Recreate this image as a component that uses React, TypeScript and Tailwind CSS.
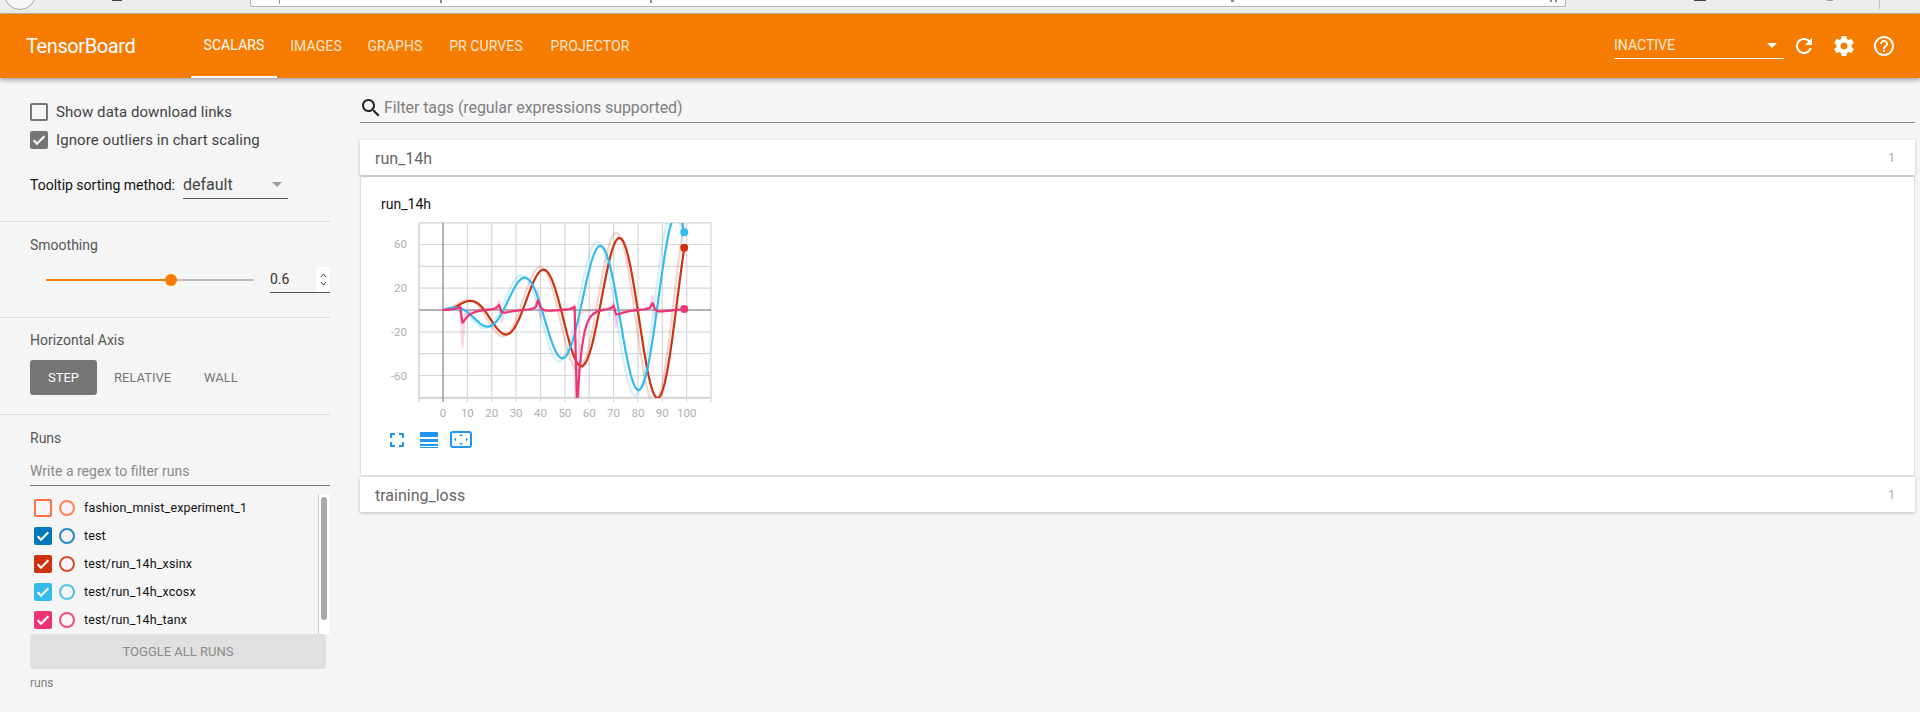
import React from "react";

const X = (v: number) => 62 + 2.437 * v;
const Y = (v: number) => 95 - 1.092 * v;

function series(f: (i: number) => number) {
  const raw: number[] = [];
  const smooth: number[] = [];
  let last = 0;
  for (let i = 0; i < 100; i++) {
    const v = f(i);
    raw.push(v);
    last = last * 0.6 + 0.4 * v;
    smooth.push(last / (1 - Math.pow(0.6, i + 1)));
  }
  return { raw, smooth };
}
const toPath = (a: number[]) =>
  a.map((v, i) => `${i ? "L" : "M"}${X(i).toFixed(2)} ${Y(Math.max(-260, Math.min(260, v))).toFixed(2)}`).join("");

const CHARTS = [
  { color: "#cc3311", ...series((i) => i * Math.sin(i / 5)) },
  { color: "#33bbee", ...series((i) => i * Math.cos(i / 5)) },
  { color: "#ee3377", ...series((i) => Math.tan(i / 5)) },
];

function Chart() {
  const gridY = [80, 60, 40, 20, -20, -40, -60, -80];
  const gridX = [10, 20, 30, 40, 50, 60, 70, 80, 90, 100];
  return (
    <svg width="345" height="208" viewBox="0 0 345 208" className="block" style={{ fontFamily: "Roboto, sans-serif" }}>
      <defs>
        <clipPath id="plot">
          <rect x="38" y="8" width="292" height="175" />
        </clipPath>
      </defs>
      {gridY.map((v) => (
        <line key={v} x1="38" x2="330" y1={Y(v)} y2={Y(v)} stroke="#d8d8d8" strokeWidth="1.2" />
      ))}
      {gridX.map((v) => (
        <line key={v} x1={X(v)} x2={X(v)} y1="8" y2="187" stroke="#d6d6d6" strokeWidth="1.2" />
      ))}
      <line x1="38" x2="38" y1="8" y2="187" stroke="#dcdcdc" strokeWidth="2" />
      <line x1="330" x2="330" y1="8" y2="187" stroke="#dcdcdc" strokeWidth="1.5" />
      <line x1="38" x2="330" y1="183" y2="183" stroke="#d8d8d8" strokeWidth="2" />
      <line x1="38" x2="330" y1="8" y2="8" stroke="#e0e0e0" strokeWidth="1.2" />
      <line x1={X(0)} x2={X(0)} y1="8" y2="187" stroke="#9a9a9a" strokeWidth="1.5" />
      <line x1="38" x2="330" y1={Y(0)} y2={Y(0)} stroke="#9a9a9a" strokeWidth="1.5" />
      {[60, 20, -20, -60].map((v) => (
        <text key={v} x="26" y={Y(v) + 4} textAnchor="end" fontSize="11.5" fill="#b0b0b0">
          {v}
        </text>
      ))}
      {[0, 10, 20, 30, 40, 50, 60, 70, 80, 90, 100].map((v) => (
        <text key={v} x={X(v)} y="202" textAnchor="middle" fontSize="11.5" fill="#b0b0b0">
          {v}
        </text>
      ))}
      <g clipPath="url(#plot)" fill="none" strokeLinejoin="round" strokeLinecap="round">
        {CHARTS.map((c) => (
          <path key={c.color} d={toPath(c.raw)} stroke={c.color} strokeWidth="2.2" opacity="0.2" />
        ))}
        {CHARTS.map((c) => (
          <path key={c.color} d={toPath(c.smooth)} stroke={c.color} strokeWidth="2.2" />
        ))}
      </g>
      {CHARTS.map((c) => (
        <circle key={c.color} cx={X(99)} cy={Y(c.smooth[99])} r="4" fill={c.color} />
      ))}
    </svg>
  );
}

function Icon({ d, size = 24, className = "" }: { d: string; size?: number; className?: string }) {
  return (
    <svg width={size} height={size} viewBox="0 0 24 24" className={className} fill="currentColor">
      <path d={d} />
    </svg>
  );
}

const CHECK = "M4 12.5l5 5L20 6.5";

function Check({ boxClass, checked }: { boxClass: string; checked: boolean }) {
  return (
    <span className={`flex h-[18px] w-[18px] shrink-0 items-center justify-center rounded-[2px] border-2 ${boxClass}`}>
      {checked && (
        <svg width="16" height="16" viewBox="0 0 24 24" fill="none" stroke="#fff" strokeWidth="3.2" className="shrink-0">
          <path d={CHECK} />
        </svg>
      )}
    </span>
  );
}

const RUNS = [
  { name: "fashion_mnist_experiment_1", box: "border-[#ff7043]", ring: "border-[#ff7043]", checked: false },
  { name: "test", box: "border-[#0077bb] bg-[#0077bb]", ring: "border-[#0077bb]", checked: true },
  { name: "test/run_14h_xsinx", box: "border-[#cc3311] bg-[#cc3311]", ring: "border-[#cc3311]", checked: true },
  { name: "test/run_14h_xcosx", box: "border-[#33bbee] bg-[#33bbee]", ring: "border-[#33bbee]", checked: true },
  { name: "test/run_14h_tanx", box: "border-[#ee3377] bg-[#ee3377]", ring: "border-[#ee3377]", checked: true },
];

function Pane({ title }: { title: string }) {
  return (
    <div className="flex h-[35px] items-center justify-between bg-white pl-[15px] pr-[20px] shadow-[0_1px_3px_rgba(0,0,0,0.25)]">
      <span className="mt-[3px] text-[16px] text-[#666666]">{title}</span>
      <span className="text-[12px] text-[#aaaaaa]">1</span>
    </div>
  );
}

export default function App() {
  return (
    <div className="flex h-[712px] w-[1920px] flex-col overflow-hidden bg-[#f5f5f5]" style={{ fontFamily: "Roboto, sans-serif" }}>
      {/* Browser strip */}
      <div className="flex h-[14px] shrink-0 items-start border-b border-[#bdbdbd] bg-[#ececec]">
        <div className="ml-[4px] mt-[-22px] h-[32px] w-[32px] shrink-0 rounded-full border border-[#a8a8a8] bg-[#f6f6f6]" />
        <div className="ml-[76px] h-[1px] w-[10px] shrink-0 bg-[#444444]" />
        <div className="ml-[128px] flex h-[7px] w-[1316px] shrink-0 rounded-b-[3px] border border-t-0 border-[#b5b5b5] bg-white pl-[28px]">
          <div className="h-[4px] w-[1px] bg-[#999999]" />
          <div className="ml-[160px] h-[3px] w-[2px] bg-[#888888]" />
          <div className="ml-[208px] h-[3px] w-[2px] bg-[#888888]" />
          <div className="ml-[579px] h-[2px] w-[3px] bg-[#888888]" />
          <div className="ml-[316px] h-[2px] w-[2px] bg-[#888888]" />
          <div className="ml-[3px] h-[2px] w-[2px] bg-[#888888]" />
        </div>
        <div className="ml-[128px] h-[1px] w-[12px] shrink-0 bg-[#444444]" />
        <div className="ml-[121px] h-[1px] w-[6px] shrink-0 bg-[#999999]" />
        <div className="ml-[46px] h-[9px] w-[1px] shrink-0 bg-[#c4c4c4]" />
      </div>

      {/* Orange toolbar */}
      <header className="relative z-10 flex h-[64px] shrink-0 items-center bg-[#f57c00] pl-[26px] text-white shadow-[0_2px_5px_rgba(0,0,0,0.35)]">
        <div className="w-[165px] text-[20px] leading-none tracking-[-0.4px]">TensorBoard</div>
        <nav className="flex h-full text-[14px] tracking-[0.1px]">
          <div className="flex h-full w-[86px] items-center justify-center border-b-2 border-white">SCALARS</div>
          <div className="flex h-full w-[78px] items-center justify-center text-white/80">IMAGES</div>
          <div className="flex h-full w-[80px] items-center justify-center text-white/80">GRAPHS</div>
          <div className="flex h-full w-[102px] items-center justify-center text-white/80">PR CURVES</div>
          <div className="flex h-full w-[106px] items-center justify-center text-white/80">PROJECTOR</div>
        </nav>
        <div className="flex-1" />
        <div className="mb-[2px] flex h-[28px] w-[170px] items-center justify-between border-b border-white pr-[7px] pt-[2px] text-[14px] text-white/85">
          <span>INACTIVE</span>
          <span className="h-0 w-0 border-x-[5px] border-t-[5px] border-x-transparent border-t-white" />
        </div>
        <div className="ml-[8px] flex items-center gap-[16px] pr-[24px]">
          <Icon size={24} d="M17.65 6.35C16.2 4.9 14.21 4 12 4c-4.42 0-7.99 3.58-7.99 8s3.57 8 7.99 8c3.73 0 6.84-2.55 7.73-6h-2.08c-.82 2.33-3.04 4-5.65 4-3.31 0-6-2.69-6-6s2.69-6 6-6c1.66 0 3.14.69 4.22 1.78L13 11h7V4l-2.35 2.35z" />
          <Icon size={24} d="M19.43 12.98c.04-.32.07-.64.07-.98s-.03-.66-.07-.98l2.11-1.65c.19-.15.24-.42.12-.64l-2-3.46c-.12-.22-.39-.3-.61-.22l-2.49 1c-.52-.4-1.08-.73-1.69-.98l-.38-2.65C14.46 2.18 14.25 2 14 2h-4c-.25 0-.46.18-.49.42l-.38 2.65c-.61.25-1.17.59-1.69.98l-2.49-1c-.23-.09-.49 0-.61.22l-2 3.46c-.13.22-.07.49.12.64l2.11 1.65c-.04.32-.07.65-.07.98s.03.66.07.98l-2.11 1.65c-.19.15-.24.42-.12.64l2 3.46c.12.22.39.3.61.22l2.49-1c.52.4 1.08.73 1.69.98l.38 2.65c.03.24.24.42.49.42h4c.25 0 .46-.18.49-.42l.38-2.65c.61-.25 1.17-.59 1.69-.98l2.49 1c.23.09.49 0 .61-.22l2-3.46c.12-.22.07-.49-.12-.64l-2.11-1.65zM12 15.5c-1.93 0-3.5-1.57-3.5-3.5s1.57-3.5 3.5-3.5 3.5 1.57 3.5 3.5-1.57 3.5-3.5 3.5z" />
          <Icon size={24} d="M11 18h2v-2h-2v2zm1-16C6.48 2 2 6.48 2 12s4.48 10 10 10 10-4.48 10-10S17.52 2 12 2zm0 18c-4.41 0-8-3.59-8-8s3.59-8 8-8 8 3.59 8 8-3.59 8-8 8zm0-14c-2.21 0-4 1.79-4 4h2c0-1.1.9-2 2-2s2 .9 2 2c0 2-3 1.75-3 5h2c0-2.25 3-2.5 3-5 0-2.21-1.79-4-4-4z" />
        </div>
      </header>

      <div className="flex min-h-0 flex-1">
        {/* Sidebar */}
        <aside className="w-[330px] shrink-0">
          <div className="h-[144px] border-b border-[#dddddd] pl-[30px] pt-[25px]">
            <div className="flex h-[18px] items-center gap-[8px] text-[15px] tracking-[0.08px] text-[#444444]">
              <Check boxClass="border-[#757575]" checked={false} />
              <span>Show data download links</span>
            </div>
            <div className="mt-[10px] flex h-[18px] items-center gap-[8px] text-[15px] tracking-[0.08px] text-[#444444]">
              <Check boxClass="border-[#757575] bg-[#757575]" checked />
              <span>Ignore outliers in chart scaling</span>
            </div>
            <div className="mt-[22px] flex items-center text-[14px] text-[#111111]">
              <span className="w-[153px]">Tooltip sorting method:</span>
              <div className="flex h-[28px] w-[105px] items-center justify-between border-b border-[#555555] pr-[6px] text-[16px] text-[#444444]">
                <span>default</span>
                <span className="h-0 w-0 border-x-[5px] border-t-[5px] border-x-transparent border-t-[#9e9e9e]" />
              </div>
            </div>
          </div>

          <div className="h-[96px] border-b border-[#dddddd] pl-[30px] pt-[14px]">
            <div className="text-[14px] leading-[18px] text-[#555555]">Smoothing</div>
            <div className="mt-[13px] flex items-center">
              <div className="ml-[16px] flex w-[208px] items-center">
                <div className="h-[2px] w-[119px] bg-[#f57c00]" />
                <div className="h-[12px] w-[12px] shrink-0 rounded-full bg-[#f57c00]" />
                <div className="h-[2px] flex-1 bg-[#bdbdbd]" />
              </div>
              <div className="ml-[16px] flex h-[26px] w-[60px] items-center justify-between border-b border-[#555555] text-[14px] text-[#333333]">
                <span>0.6</span>
                <div className="flex h-full w-[14px] flex-col items-center justify-center gap-[3px] bg-white">
                  <svg width="7" height="5" viewBox="0 0 7 5" fill="none" stroke="#444" strokeWidth="1"><path d="M1 4l2.5-3L6 4" /></svg>
                  <svg width="7" height="5" viewBox="0 0 7 5" fill="none" stroke="#444" strokeWidth="1"><path d="M1 1l2.5 3L6 1" /></svg>
                </div>
              </div>
            </div>
          </div>

          <div className="h-[97px] border-b border-[#dddddd] pl-[30px] pt-[13px]">
            <div className="text-[14px] leading-[18px] text-[#555555]">Horizontal Axis</div>
            <div className="mt-[11px] flex items-center text-[13px] text-[#757575]">
              <div className="flex h-[35px] w-[67px] items-center justify-center rounded-[3px] bg-[#757575] text-white">STEP</div>
              <div className="ml-[17px] w-[57px] text-center">RELATIVE</div>
              <div className="ml-[33px]">WALL</div>
            </div>
          </div>

          <div className="pt-[14px]">
            <div className="pl-[30px] text-[14px] leading-[18px] text-[#555555]">Runs</div>
            <div className="ml-[30px] mt-[11px] h-[28px] border-b border-[#757575] pt-[3px] text-[14px] leading-[20px] text-[#8a8a8a]">Write a regex to filter runs</div>
            <div className="ml-[30px] mt-[8px] flex h-[140px] overflow-hidden">
              <div className="w-[288px] pl-[4px] pt-[5px]">
                {RUNS.map((r) => (
                  <div key={r.name} className="flex h-[28px] items-start">
                    <Check boxClass={r.box} checked={r.checked} />
                    <span className={`ml-[7px] mt-[1px] h-[16px] w-[16px] rounded-full border-2 opacity-85 ${r.ring}`} />
                    <span className="ml-[9px] text-[12.5px] leading-[18px] tracking-[0.15px] text-[#111111]">{r.name}</span>
                  </div>
                ))}
              </div>
              <div className="w-[12px] border-l border-[#cccccc] bg-white pl-[2px] pt-[3px]">
                <div className="h-[123px] w-[6px] rounded-full bg-[#a9a9ad]" />
              </div>
            </div>
            <div className="ml-[30px] flex h-[35px] w-[296px] items-center justify-center rounded-[3px] bg-[#e0e0e0] text-[13px] text-[#8a8a8a]">TOGGLE ALL RUNS</div>
            <div className="ml-[30px] mt-[7px] text-[12px] leading-[14px] text-[#808080]">runs</div>
          </div>
        </aside>

        {/* Main */}
        <main className="min-w-0 flex-1 pl-[30px] pr-[5px]">
          <div className="mt-[17px] flex h-[28px] items-center border-b border-[#8a8a8a] text-[16px] tracking-[-0.08px] text-[#808080]">
            <Icon size={24} className="ml-[-1px] mb-[2px] text-[#222222]" d="M15.5 14h-.79l-.28-.27C15.41 12.59 16 11.11 16 9.5 16 5.91 13.09 3 9.5 3S3 5.91 3 9.5 5.91 16 9.5 16c1.61 0 3.09-.59 4.23-1.57l.27.28v.79l5 4.99L20.49 19l-4.99-5zm-6 0C7.01 14 5 11.99 5 9.5S7.01 5 9.5 5 14 7.01 14 9.5 11.99 14 9.5 14z" />
            <span className="mb-[2px] ml-[1px]">Filter tags (regular expressions supported)</span>
          </div>
          <div className="mt-[17px]">
            <Pane title="run_14h" />
            <div className="mx-[1px] mt-[2px] h-[298px] bg-white pl-[20px] pt-[18px] shadow-[0_0_2px_rgba(0,0,0,0.3)]">
              <div className="text-[14px] leading-[18px] text-[#111111]">run_14h</div>
              <div className="mt-[2px]">
                <Chart />
              </div>
              <div className="ml-[9px] mt-[8px] flex items-center text-[#2196f3]">
                <svg width="14" height="14" viewBox="0 0 14 14" fill="currentColor">
                  <path d="M0 0h5v2H2v3H0zM9 0h5v5h-2V2H9zM0 9h2v3h3v2H0zM12 9h2v5H9v-2h3z" />
                </svg>
                <svg width="18" height="16" viewBox="0 0 18 16" fill="currentColor" className="ml-[16px]">
                  <path d="M0 0h18v5H0zM0 7h18v3H0zM0 12h18v2H0zM0 15h18v1H0z" />
                </svg>
                <svg width="22" height="17" viewBox="0 0 22 17" className="ml-[12px]">
                  <rect x="1" y="1" width="20" height="15" rx="2" fill="none" stroke="currentColor" strokeWidth="2" />
                  <path d="M11 3l2 2H9zM11 14l2-2H9zM4 8.5l2-2v4zM18 8.5l-2-2v4z" fill="currentColor" />
                </svg>
              </div>
            </div>
            <div className="mt-[2px]">
              <Pane title="training_loss" />
            </div>
          </div>
        </main>
      </div>
    </div>
  );
}
